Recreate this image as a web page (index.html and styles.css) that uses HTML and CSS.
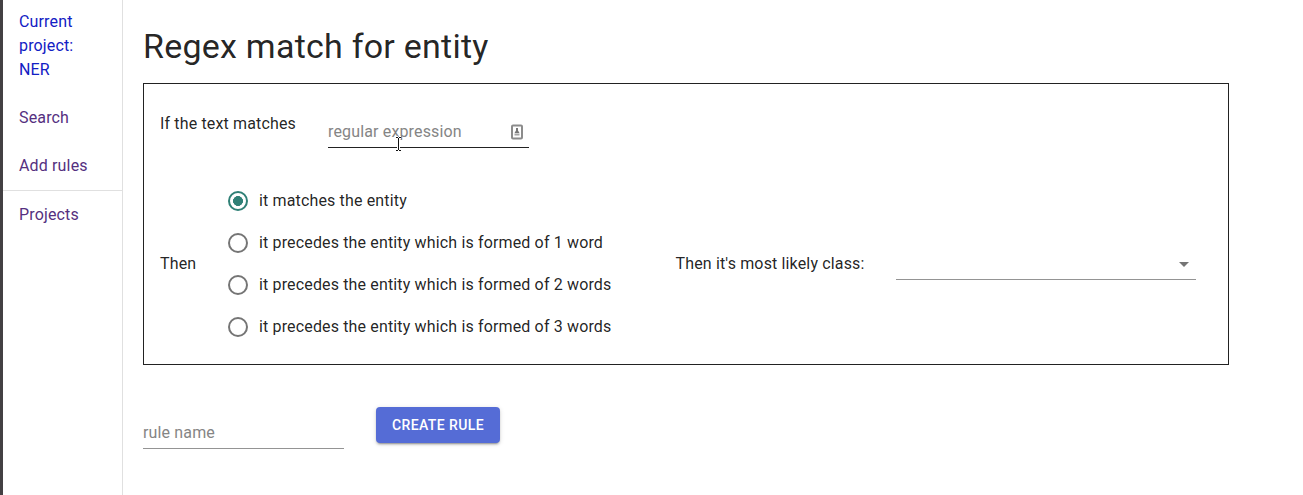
FILE: index.html
```html
<!DOCTYPE html>
<html lang="en">
<head>
<meta charset="utf-8">
<title>Regex match for entity</title>
<link rel="stylesheet" href="styles.css">
</head>
<body>
<div class="app">
  <nav class="sidebar">
    <a class="link current">Current project: NER</a>
    <a class="link">Search</a>
    <a class="link">Add rules</a>
    <hr class="divider">
    <a class="link">Projects</a>
  </nav>
  <main class="content">
    <h1 class="title">Regex match for entity</h1>
    <section class="panel">
      <div class="match-row">
        <span class="match-label">If the text matches</span>
        <div class="field regex"><span>regular expression</span>
          <svg class="fill-icon" width="12" height="16" viewBox="0 0 12 16" fill="none"><rect x="1" y="1.5" width="10" height="13" rx="1" stroke="#8c8c8c" stroke-width="2"/><path d="M5 4h2v2.5l1.5 2.5h-5L5 6.5z" fill="#777"/><path d="M3.5 9.5h5v2h-5z" fill="#a5a5a5"/></svg>
          <svg class="cursor" width="9" height="16" viewBox="0 0 9 16" fill="none"><path d="M2 1.5h2M5 1.5h2M4.5 2v12M2 14.5h2M5 14.5h2" stroke="#fff" stroke-width="3"/><path d="M2 1.5h2M5 1.5h2M4.5 2v12M2 14.5h2M5 14.5h2" stroke="#111"/></svg>
        </div>
      </div>
      <div class="then-row">
        <span class="then">Then</span>
        <div class="options">
          <div class="option"><i class="radio checked"></i>it matches the entity</div>
          <div class="option"><i class="radio"></i>it precedes the entity which is formed of 1 word</div>
          <div class="option"><i class="radio"></i>it precedes the entity which is formed of 2 words</div>
          <div class="option"><i class="radio"></i>it precedes the entity which is formed of 3 words</div>
        </div>
        <span class="class-label">Then it's most likely class:</span>
        <div class="select"><i class="arrow"></i></div>
      </div>
    </section>
    <div class="actions">
      <div class="field name"><span>rule name</span></div>
      <button class="create">CREATE RULE</button>
    </div>
  </main>
</div>
</body>
</html>
```
FILE: styles.css
```css
* { box-sizing: border-box; }
body { margin: 0; background: #fff; color: rgba(0,0,0,.87); font: 16px/24px Roboto, sans-serif; letter-spacing: .15px; }
.app { display: flex; height: 495px; overflow: hidden; }
.sidebar { width: 123px; flex: none; border-left: 3px solid #434043; border-right: 1px solid #e0e0e0; padding-top: 2px; }
.link { display: block; padding: 12px 16px; color: #55307f; }
.current { padding-top: 8px; color: #1220c4; }
.divider { margin: 0; border: 0; height: 1px; background: #e0e0e0; }
.content { padding: 25px 0 0 20px; width: 1106px; }
.title { margin: 0; font-size: 34px; line-height: 42px; font-weight: 400; letter-spacing: .24px; }
.panel { margin-top: 16px; height: 282px; border: 1px solid #222; padding: 27px 16px 0; }
.match-row { display: flex; gap: 32px; }
.match-label { padding-top: 1px; }
.field { position: relative; width: 201px; height: 32px; border-bottom: 1px solid #949494; color: #858585; padding-top: 4px; line-height: 24px; }
.regex { margin-top: 5px; border-color: #222; display: flex; justify-content: space-between; padding-right: 6px; }
.fill-icon { margin-top: 4px; }
.cursor { position: absolute; left: 66px; top: 20px; }
.then-row { display: flex; align-items: center; margin-top: 32px; height: 168px; }
.then { width: 67px; }
.options { width: 448.5px; }
.option { display: flex; align-items: center; height: 42px; gap: 11px; }
.radio { width: 20px; height: 20px; margin-left: 1px; border: 2px solid #757575; border-radius: 50%; }
.checked { border-color: #2f8076; background: radial-gradient(circle, #2f8076 4.7px, transparent 5.2px); }
.class-label { width: 220.5px; }
.select { width: 300px; height: 32px; border-bottom: 1px solid #949494; display: flex; justify-content: flex-end; align-items: center; padding: 2px 7px 0 0; }
.arrow { border: 5px solid transparent; border-top-color: #757575; border-bottom: 0; }
.actions { display: flex; margin-top: 42px; gap: 32px; }
.name { margin-top: 10px; }
.create { width: 124px; height: 36px; border: 0; border-radius: 4px; background: #556cd6; color: #fff; font: 500 14px/24px Roboto, sans-serif; letter-spacing: .4px; padding: 0; box-shadow: 0 3px 1px -2px #0003, 0 2px 2px #0002, 0 1px 5px #0002; }
```
